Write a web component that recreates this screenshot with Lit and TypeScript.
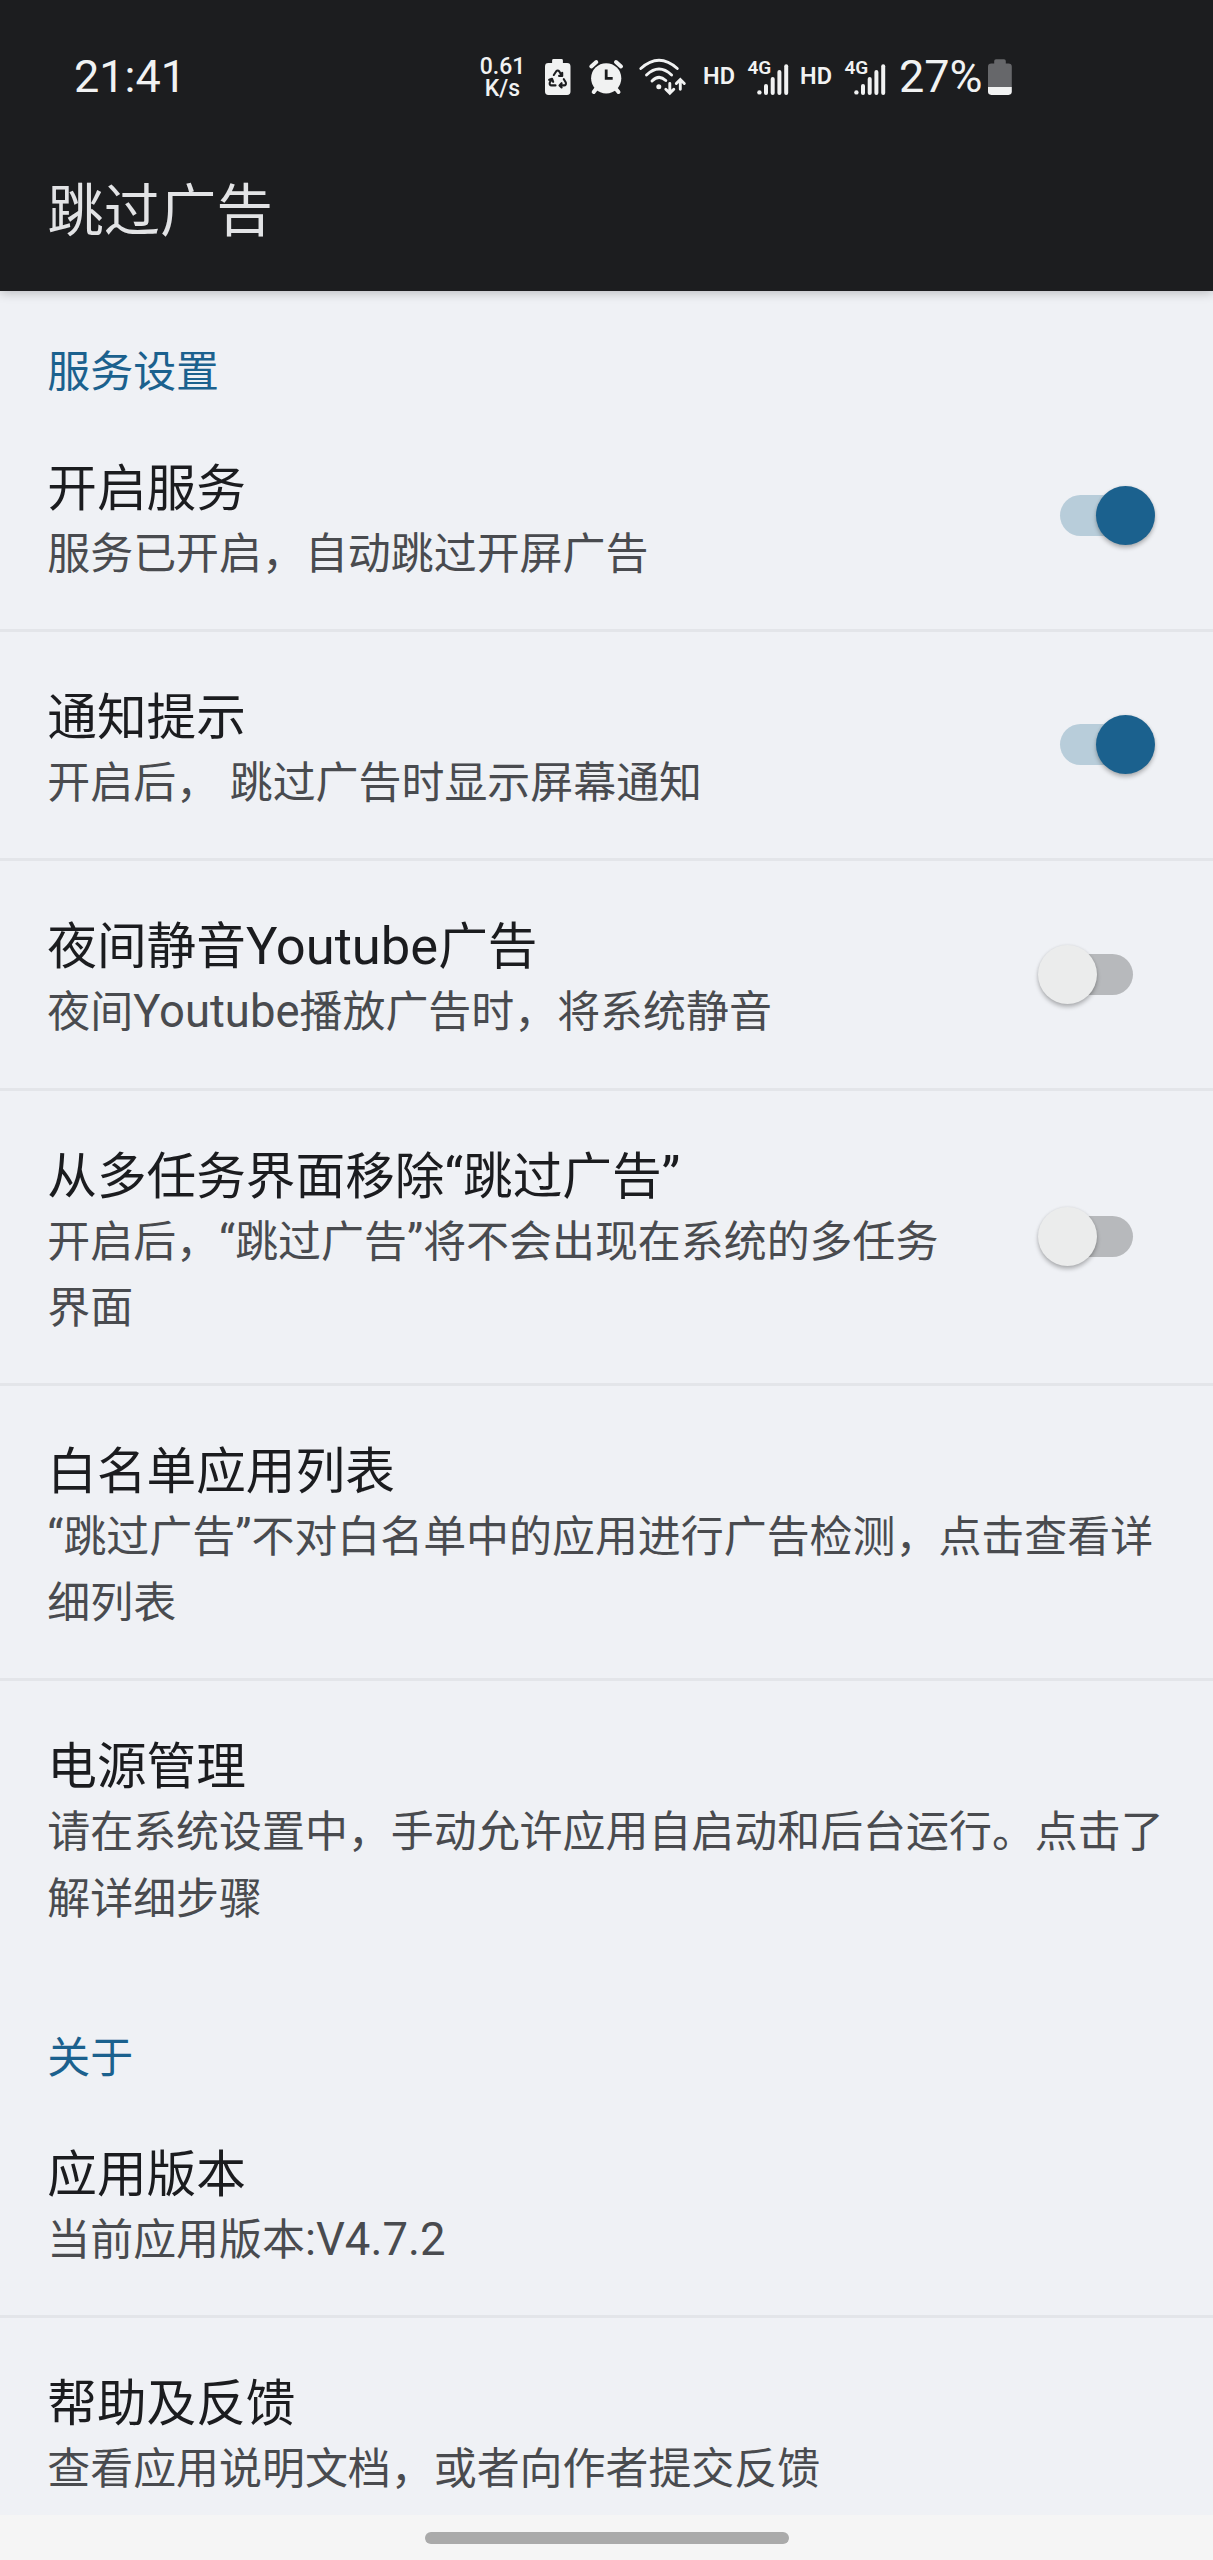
import { LitElement, html, css, nothing } from "lit";
import { customElement, property } from "lit/decorators.js";

interface Item {
  title: string;
  summary: string[];
  on?: boolean;
}

const SERVICE: Item[] = [
  { title: "开启服务", summary: ["服务已开启，自动跳过开屏广告"], on: true },
  { title: "通知提示", summary: ["开启后， 跳过广告时显示屏幕通知"], on: true },
  { title: "夜间静音Youtube广告", summary: ["夜间Youtube播放广告时，将系统静音"], on: false },
  { title: "从多任务界面移除“跳过广告”", summary: ["开启后，“跳过广告”将不会出现在系统的多任务", "界面"], on: false },
  { title: "白名单应用列表", summary: ["“跳过广告”不对白名单中的应用进行广告检测，点击查看详", "细列表"] },
  { title: "电源管理", summary: ["请在系统设置中，手动允许应用自启动和后台运行。点击了", "解详细步骤"] },
];

const ABOUT: Item[] = [
  { title: "应用版本", summary: ["当前应用版本:V4.7.2"] },
  { title: "帮助及反馈", summary: ["查看应用说明文档，或者向作者提交反馈"] },
];

// Latin runs are set slightly larger than the Chinese text around them.
const mixed = (text: string) =>
  text
    .split(/([A-Za-z0-9:.]+|[“”])/)
    .map((part, i) => (i % 2 ? html`<span class="latin">${part}</span>` : part));

@customElement("status-bar")
export class StatusBar extends LitElement {
  static styles = css`
    :host {
      display: flex;
      align-items: flex-start;
      padding: 58px 190px 0 74px;
      height: 40px;
      color: #f1f2f2;
      font-family: Roboto, "Noto Sans CJK SC", sans-serif;
      white-space: nowrap;
    }
    svg { display: block; flex: none; overflow: visible; }
    .clock { width: 400px; font-size: 45px; line-height: 37px; }
    .speed { width: 57px; font-size: 23px; line-height: 22px; font-weight: 500; text-align: center; margin-top: -2px; }
    .gap1 { margin-left: 14px; }
    .gap2 { margin-left: 17px; }
    .gap3 { margin-left: 15px; }
    .hd { font-size: 23.5px; line-height: 37px; font-weight: 600; width: 31px; }
    .hd1 { margin-left: 16px; }
    .hd2 { margin-left: 10px; }
    .sig { margin-left: 14px; }
    .percent { margin-left: 12px; width: 89px; font-size: 45px; line-height: 37px; }
    .g4 { font-size: 19px; font-weight: 600; fill: #f1f2f2; }
  `;

  private signal() {
    return html`<svg class="sig" width="42" height="37" viewBox="0 0 42 37">
      <text class="g4" x="-0.5" y="16">4G</text>
      <g fill="#f1f2f2">
        <circle cx="11.400" cy="34.400" r="2.200" />
        <rect x="16" y="26" width="4" height="11" rx="2" />
        <rect x="22.700" y="19" width="4" height="18" rx="2" />
        <rect x="29.400" y="12" width="4" height="25" rx="2" />
        <rect x="36.200" y="6.300" width="4" height="30.700" rx="2" />
      </g>
    </svg>`;
  }

  render() {
    return html`
      <div class="clock">21:41</div>
      <div class="speed">0.61<br />K/s</div>
      <svg class="gap1" width="26" height="37" viewBox="0 0 26 37">
        <path fill="#f1f2f2" d="M8.500 1h8q1.400 0 1.400 1.400V5h4.200q3.400 0 3.400 3.400v25.100q0 3.400-3.400 3.400H3.400q-3.400 0-3.400-3.400V8.400Q0 5 3.400 5H7.100V2.400Q7.100 1 8.500 1z" />
        <g fill="none" stroke="#1c1d1f" stroke-width="2.100" stroke-linecap="round" stroke-linejoin="round">
          <path d="M8.800 17l2.300-3.500q1.600-1.900 3.200 0l2.500 4.200M17.200 14.800v3.100h-3.100" />
          <path d="M18.800 21.200l2 3.300q.7 2.700-1.900 2.900H14.800M16.600 25.200l-2.100 2.200 2.100 2.100" />
          <path d="M10.500 27.400H6.700q-2.600-.2-1.900-2.900l2-3.400M4.200 21.800l2.900-1 1.100 3" />
        </g>
      </svg>
      <svg class="gap2" width="36" height="37" viewBox="0 0 36 37">
        <g stroke="#f1f2f2" stroke-width="4" stroke-linecap="round" fill="none">
          <path d="M3.300 8.500L8.300 4M28 4l5 4.500M8 31l-2.300 3M28 31l2.500 3" />
        </g>
        <circle cx="18.200" cy="20.300" r="15.100" fill="#f1f2f2" />
        <path d="M18.200 11.500v8.800h6.500" fill="none" stroke="#1c1d1f" stroke-width="2.800" />
      </svg>
      <svg class="gap3" width="48" height="37" viewBox="0 0 48 37">
        <g fill="none" stroke="#f1f2f2" stroke-width="2.900" stroke-linecap="round">
          <path d="M1.800 10.500Q20 -6 38.300 10.500" />
          <path d="M7.500 17Q20 5 32.600 17" />
          <path d="M13 23Q20 16 26.800 22.500" />
          <path d="M30.800 25.500V34.500M26.800 31.200l4 4 4-4M41.300 31.300V22M37.300 25.500l4-4 4 4" />
        </g>
        <circle cx="19.800" cy="28.800" r="2.500" fill="#f1f2f2" />
      </svg>
      <div class="hd hd1">HD</div>
      ${this.signal()}
      <div class="hd hd2">HD</div>
      ${this.signal()}
      <div class="percent">27%</div>
      <svg width="24" height="37" viewBox="0 0 24 37">
        <path fill="#66676a" d="M8 1.200h8q1.800 0 1.800 1.800v2.500h2.700q3.300 0 3.300 3.300V29H0V8.800q0-3.300 3.300-3.300h2.900V3q0-1.800 1.800-1.800z" />
        <path fill="#f1f2f2" d="M0 29h23.800v4.600q0 3.300-3.300 3.300H3.300q-3.300 0-3.300-3.300z" />
      </svg>
    `;
  }
}

@customElement("toggle-switch")
export class ToggleSwitch extends LitElement {
  @property({ type: Boolean }) on = false;
  static styles = css`
    :host { display: block; flex: none; }
    .track {
      display: flex;
      align-items: center;
      justify-content: flex-start;
      width: 73px;
      height: 41px;
      border-radius: 21px;
      background: #b7b9bc;
    }
    .track.on { justify-content: flex-end; background: #b8cdda; }
    .thumb {
      flex: none;
      width: 59px;
      height: 59px;
      border-radius: 50%;
      background: #ebecec;
      margin: 0 -22px 0 -22.500px;
      box-shadow: 0 3px 4px rgba(0, 0, 0, 0.26), 0 0 3px rgba(0, 0, 0, 0.08);
    }
    .on .thumb { background: #1b618e; }
  `;
  render() {
    return html`<div class="track ${this.on ? "on" : ""}"><div class="thumb"></div></div>`;
  }
}

@customElement("app-root")
export class AppRoot extends LitElement {
  static styles = css`
    :host {
      display: flex;
      flex-direction: column;
      width: 1213px;
      height: 2560px;
      overflow: hidden;
      background: #eff1f5;
      font-family: Roboto, "Noto Sans CJK SC", sans-serif;
      text-spacing-trim: space-all;
      white-space: nowrap;
    }
    .header {
      flex: none;
      height: 291px;
      background: #1c1d1f;
      box-shadow: 0 2px 10px rgba(0, 0, 0, 0.22);
      z-index: 1;
    }
    .app-title {
      margin: 0;
      padding: 74px 0 0 47.500px;
      font-size: 56.300px;
      line-height: 80px;
      font-weight: 400;
      color: #e2e3e5;
    }
    .list { flex: 1; min-height: 0; overflow: hidden; }
    .section {
      height: 112px;
      box-sizing: border-box;
      padding: 48px 0 0 47.300px;
      font-size: 42.950px;
      line-height: 66px;
      color: #1b618e;
    }
    .row {
      display: flex;
      align-items: center;
      justify-content: space-between;
      box-sizing: border-box;
      padding: 54px 80px 42px 47.300px;
      border-bottom: 3px solid #e3e5e9;
    }
    .row.last { border-bottom-color: transparent; }
    .title { font-size: 49.650px; line-height: 65px; height: 64px; color: #1b1c1f; }
    .summary { font-size: 42.950px; line-height: 66.200px; height: 66.200px; color: #494b4f; }
    .latin { font-size: 1.058em; line-height: 1; }
    .row toggle-switch { margin-top: -12.800px; margin-bottom: 0; }
    .wide { padding-right: 0; }
    .nav {
      flex: none;
      height: 45px;
      background: #f5f5f5;
      display: flex;
      justify-content: center;
      box-sizing: border-box;
      padding-top: 17px;
    }
    .pill { width: 364px; height: 12px; border-radius: 6px; background: #aaaaaa; }
  `;

  private row(item: Item, last: boolean) {
    const toggled = item.on !== undefined;
    return html`<div class="row ${last ? "last" : ""} ${toggled ? "" : "wide"}">
      <div class="text">
        <div class="title">${mixed(item.title)}</div>
        ${item.summary.map((line) => html`<div class="summary">${mixed(line)}</div>`)}
      </div>
      ${toggled ? html`<toggle-switch ?on=${item.on}></toggle-switch>` : nothing}
    </div>`;
  }

  render() {
    return html`
      <div class="header">
        <status-bar></status-bar>
        <h1 class="app-title">跳过广告</h1>
      </div>
      <div class="list">
        <div class="section">服务设置</div>
        ${SERVICE.map((it, i) => this.row(it, i === SERVICE.length - 1))}
        <div class="section">关于</div>
        ${ABOUT.map((it, i) => this.row(it, i === ABOUT.length - 1))}
      </div>
      <div class="nav"><div class="pill"></div></div>
    `;
  }
}
